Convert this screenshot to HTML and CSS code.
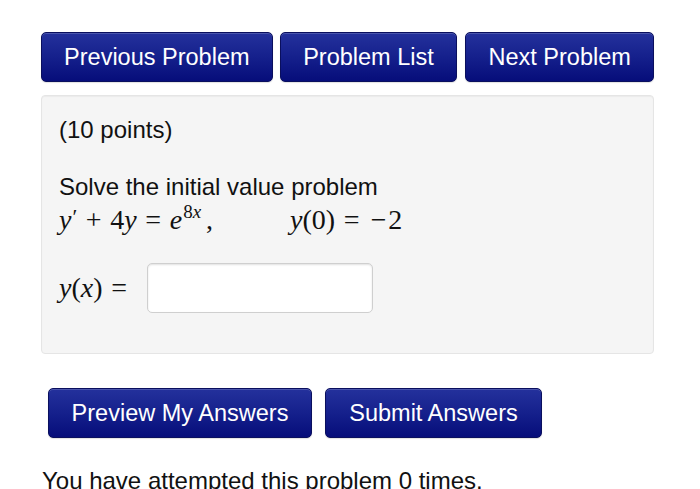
FILE: index.html
```html
<!DOCTYPE html>
<html>
<head>
<meta charset="utf-8">
<link rel="stylesheet" href="styles.css">
</head>
<body>
<div class="page">
  <div class="nav">
    <a class="btn btn-prev">Previous Problem</a>
    <a class="btn btn-list">Problem List</a>
    <a class="btn btn-next">Next Problem</a>
  </div>
  <div class="panel">
    <p class="points">(10 points)</p>
    <p class="intro">Solve the initial value problem</p>
    <div class="math eq">
      <span class="mi">y</span><span class="prime">′</span><span class="mo">+</span><span class="mn">4</span><span class="mi">y</span><span class="mo">=</span><span class="mi">e</span><sup class="sup"><span class="mn">8</span><span class="mi">x</span></sup><span class="comma">,</span>
      <span class="cond"><span class="mi">y</span>(<span class="mn">0</span>)<span class="mo">=</span><span class="minus">−</span>2</span>
    </div>
    <div class="answer">
      <span class="math lhs"><span class="mi">y</span>(<span class="mi">x</span>)<span class="mo">=</span></span>
      <input class="ans-input" type="text">
    </div>
  </div>
  <div class="actions">
    <a class="btn btn-preview">Preview My Answers</a>
    <a class="btn btn-submit">Submit Answers</a>
  </div>
  <p class="attempts">You have attempted this problem 0 times.</p>
</div>
</body>
</html>
```
FILE: styles.css
```css
html, body {
  margin: 0;
  padding: 0;
  background: #ffffff;
  overflow: hidden;
}

body {
  font-family: "Liberation Sans", Arial, Helvetica, sans-serif;
  font-size: 24px;
  line-height: 30px;
  color: #111111;
}

.page {
  padding-left: 41px;
  width: 613px;
}

.nav {
  display: flex;
  gap: 7px;
  margin-top: 32px;
}

.btn {
  display: flex;
  align-items: center;
  justify-content: center;
  box-sizing: border-box;
  height: 50px;
  padding: 0 22px;
  font-size: 23.5px;
  color: #ffffff;
  background-image: linear-gradient(to bottom, #24319c 0%, #15208c 50%, #060d7a 100%);
  border: 1px solid #0a0f5e;
  border-radius: 5px;
  box-shadow: inset 0 1px 0 rgba(255, 255, 255, 0.18), 0 1px 1px rgba(0, 0, 0, 0.12);
  white-space: nowrap;
}

.btn-prev { width: 232px; }
.btn-list { width: 178px; }
.btn-next { width: 189px; margin-left: 1px; }

.panel {
  box-sizing: border-box;
  margin-top: 13px;
  width: 613px;
  height: 259px;
  padding: 19px 17px 0 17px;
  background: #f5f5f5;
  border: 1px solid #e5e5e5;
  border-radius: 4px;
  box-shadow: inset 0 1px 1px rgba(0, 0, 0, 0.04);
}

.panel p {
  margin: 0;
}

.intro {
  margin-top: 27px !important;
}

.math {
  font-family: "Liberation Serif", "Times New Roman", serif;
  font-size: 28px;
  color: #111111;
}

.mi {
  font-style: italic;
}

.eq {
  display: flex;
  align-items: baseline;
  height: 36px;
  line-height: 36px;
  white-space: nowrap;
}

.prime {
  font-size: 22px;
  margin-left: 1px;
  position: relative;
  top: -5px;
}

.mo {
  display: inline-block;
  width: 23px;
  text-align: center;
  margin: 0 5px;
}

.minus {
  display: inline-block;
  width: 17px;
  text-align: center;
  margin-left: 2px;
  margin-right: 1px;
}

.sup {
  font-size: 19px;
  line-height: 1;
  position: relative;
  top: -11px;
  vertical-align: baseline;
  margin-left: 1px;
}

.comma {
  margin-left: 5px;
}

.cond {
  margin-left: 77px;
}

.answer {
  display: flex;
  align-items: center;
  margin-top: 25px;
  height: 50px;
}

.lhs {
  width: 88px;
  flex: none;
}

.lhs .mo {
  margin-left: 5px;
}

.ans-input {
  box-sizing: border-box;
  width: 226px;
  height: 50px;
  margin: 0;
  padding: 4px 8px;
  background: #ffffff;
  border: 1px solid #cfcfcf;
  border-radius: 5px;
  box-shadow: inset 0 1px 2px rgba(0, 0, 0, 0.12);
  font-size: 20px;
  outline: none;
}

.actions {
  display: flex;
  gap: 13px;
  margin-top: 34px;
  padding-left: 7px;
}

.btn-preview { width: 264px; }
.btn-submit { width: 217px; }

.attempts {
  margin: 28px 0 0 1px;
  white-space: nowrap;
}
```
